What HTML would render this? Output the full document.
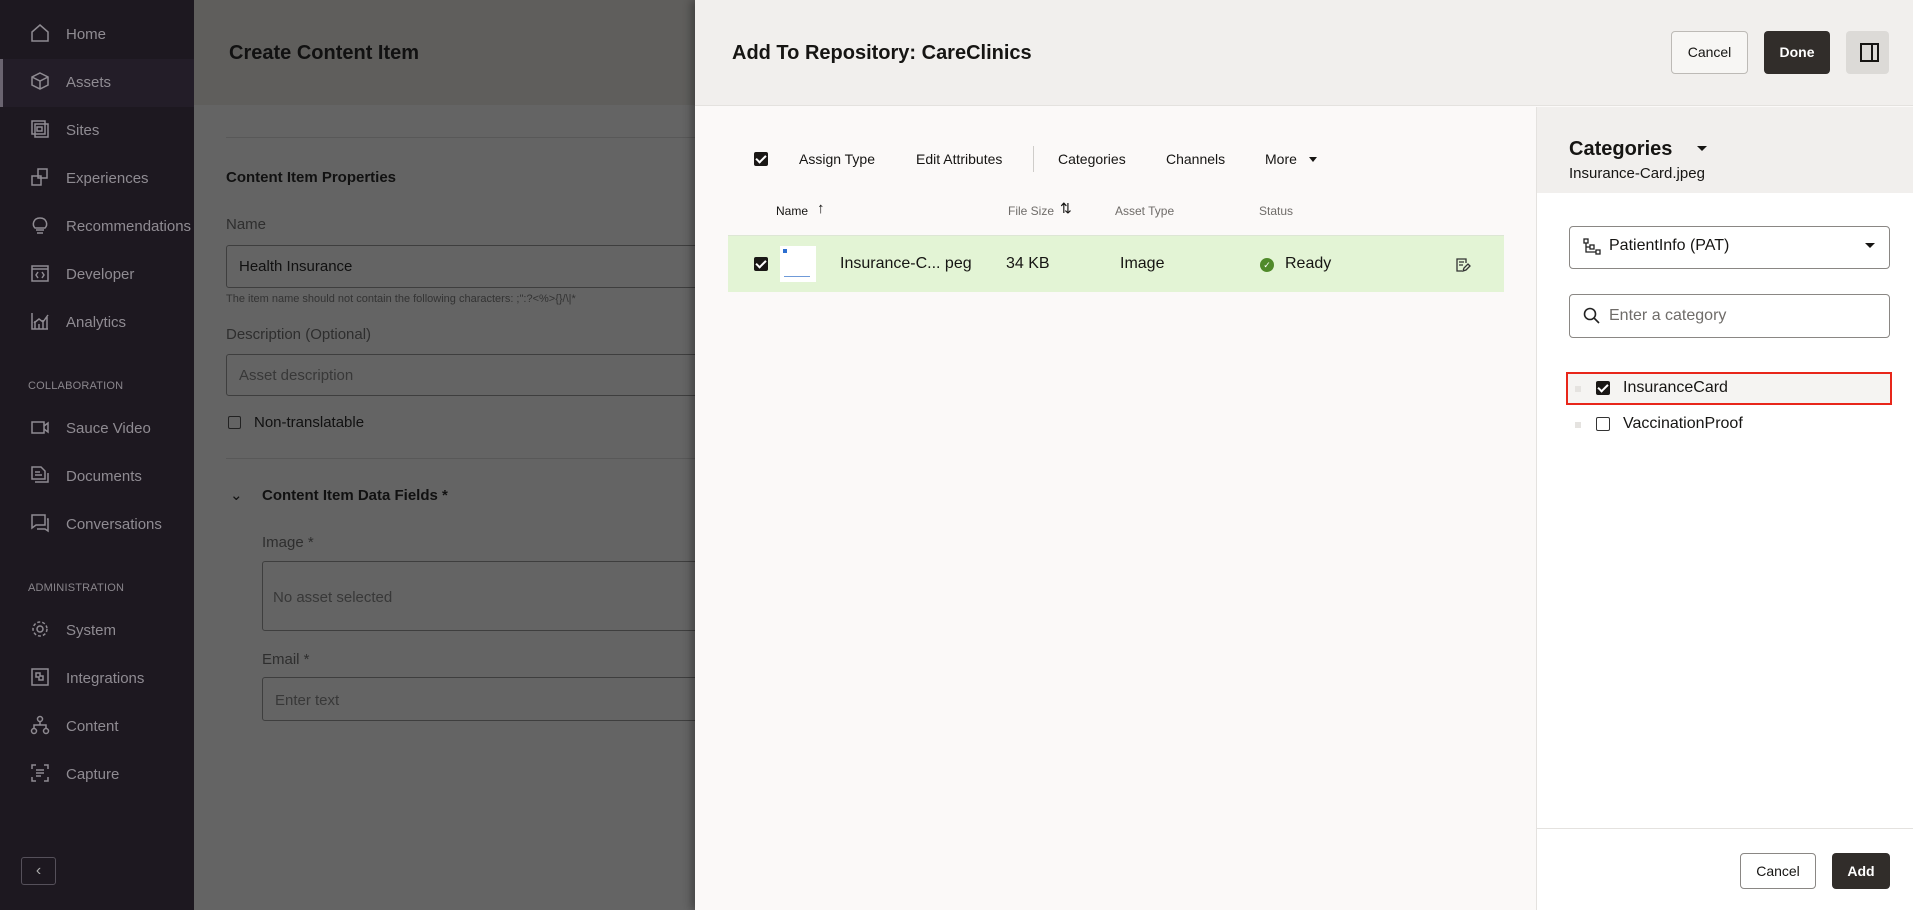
<!DOCTYPE html>
<html><head><meta charset="utf-8">
<style>
*{box-sizing:border-box;margin:0;padding:0}
body{width:1913px;height:910px;overflow:hidden;font-family:"Liberation Sans",sans-serif;position:relative;background:#646464;color:#161513}
.abs{position:absolute}
#side{left:0;top:0;width:194px;height:910px;background:#1d1820}
.nav{position:absolute;left:0;width:194px;height:48px;color:#8f8b92;font-size:15px}
.nav svg{position:absolute;left:30px;top:12px}
.nav span{position:absolute;left:66px;top:15px}
.sec{position:absolute;left:28px;font-size:11px;color:#8a868c;letter-spacing:.2px}
#bg{left:194px;top:0;width:501px;height:910px;background:#646464}
.bgt{position:absolute;color:#111}
.inp{position:absolute;border:1px solid #3e3e3e;border-radius:3px;background:#646464}
#modal{left:695px;top:0;width:1218px;height:910px;background:#fbf9f8;box-shadow:-4px 0 8px rgba(0,0,0,.3)}
.btn{position:absolute;border-radius:4px;font-size:14px;text-align:center;font-weight:bold}
.cb{position:absolute;width:14px;height:14px;border-radius:2px}
.cbon{background:#1a1816}
.cbon:after{content:"";position:absolute;left:4px;top:1px;width:4px;height:8px;border:solid #fff;border-width:0 2px 2px 0;transform:rotate(45deg)}
.cboff{border:1.5px solid #333}
.tb{position:absolute;top:151px;font-size:14px;color:#161513}
.th{position:absolute;top:204px;font-size:12px;color:#6f6c69}
</style></head><body>
<div id="side" class="abs">
 <div class="abs" style="left:0;top:59px;width:194px;height:48px;background:#231d28"></div>
 <div class="abs" style="left:0;top:59px;width:3px;height:48px;background:#6a6470"></div>
 <div class="nav" style="top:11px"><svg width="20" height="20" viewBox="0 0 20 20" fill="none" stroke="#8f8b92" stroke-width="1.5"><path d="M2 9L10 2L18 9V18H2Z"/></svg><span>Home</span></div>
 <div class="nav" style="top:59px"><svg width="20" height="20" viewBox="0 0 20 20" fill="none" stroke="#8f8b92" stroke-width="1.5"><path d="M10 2L18 6V14L10 18L2 14V6Z M2 6L10 10L18 6 M10 10V18"/></svg><span>Assets</span></div>
 <div class="nav" style="top:107px"><svg width="20" height="20" viewBox="0 0 20 20" fill="none" stroke="#8f8b92" stroke-width="1.5"><rect x="2" y="2" width="13" height="13"/><rect x="5" y="5" width="13" height="13"/><rect x="7" y="8" width="5" height="4"/></svg><span>Sites</span></div>
 <div class="nav" style="top:155px"><svg width="20" height="20" viewBox="0 0 20 20" fill="none" stroke="#8f8b92" stroke-width="1.5"><rect x="8" y="2" width="9" height="9"/><rect x="2" y="9" width="9" height="9"/></svg><span>Experiences</span></div>
 <div class="nav" style="top:203px"><svg width="20" height="20" viewBox="0 0 20 20" fill="none" stroke="#8f8b92" stroke-width="1.5"><path d="M5 13C2 10 3 3 10 3C17 3 18 10 15 13Z M6 15H14 M7 18H13"/></svg><span>Recommendations</span></div>
 <div class="nav" style="top:251px"><svg width="20" height="20" viewBox="0 0 20 20" fill="none" stroke="#8f8b92" stroke-width="1.5"><rect x="2" y="3" width="16" height="15"/><path d="M2 6H18 M8 9L6 12L8 15 M12 9L14 12L12 15"/></svg><span>Developer</span></div>
 <div class="nav" style="top:299px"><svg width="20" height="20" viewBox="0 0 20 20" fill="none" stroke="#8f8b92" stroke-width="1.5"><path d="M2 2V18H18 M5 18V10 M9 18V13 M13 18V9 M17 18V6 M4 12L9 8L13 11L18 4"/></svg><span>Analytics</span></div>
 <div class="sec" style="top:380px">COLLABORATION</div>
 <div class="nav" style="top:405px"><svg width="20" height="20" viewBox="0 0 20 20" fill="none" stroke="#8f8b92" stroke-width="1.5"><rect x="2" y="5" width="12" height="11"/><path d="M14 9L18 6V15L14 12"/></svg><span>Sauce Video</span></div>
 <div class="nav" style="top:453px"><svg width="20" height="20" viewBox="0 0 20 20" fill="none" stroke="#8f8b92" stroke-width="1.5"><path d="M2 2H11L15 6V14H2Z M5 17H18V8 M5 7H10 M5 10H12"/></svg><span>Documents</span></div>
 <div class="nav" style="top:501px"><svg width="20" height="20" viewBox="0 0 20 20" fill="none" stroke="#8f8b92" stroke-width="1.5"><path d="M2 2H15V12H6L2 15Z M17 6H18V18L15 16H7"/></svg><span>Conversations</span></div>
 <div class="sec" style="top:582px">ADMINISTRATION</div>
 <div class="nav" style="top:607px"><svg width="20" height="20" viewBox="0 0 20 20" fill="none" stroke="#8f8b92" stroke-width="1.5"><circle cx="10" cy="10" r="3"/><circle cx="10" cy="10" r="7" stroke-dasharray="3 2"/></svg><span>System</span></div>
 <div class="nav" style="top:655px"><svg width="20" height="20" viewBox="0 0 20 20" fill="none" stroke="#8f8b92" stroke-width="1.5"><rect x="2" y="2" width="16" height="16"/><path d="M6 6H10V9H13V13H9V10H6Z"/></svg><span>Integrations</span></div>
 <div class="nav" style="top:703px"><svg width="20" height="20" viewBox="0 0 20 20" fill="none" stroke="#8f8b92" stroke-width="1.5"><circle cx="10" cy="4" r="2.5"/><circle cx="4" cy="16" r="2.5"/><circle cx="16" cy="16" r="2.5"/><path d="M10 7V10 M4 13V10H16V13"/></svg><span>Content</span></div>
 <div class="nav" style="top:751px"><svg width="20" height="20" viewBox="0 0 20 20" fill="none" stroke="#8f8b92" stroke-width="1.5"><path d="M2 6V2H6 M14 2H18V6 M18 14V18H14 M6 18H2V14 M6 7H14 M6 10H14 M6 13H11"/></svg><span>Capture</span></div>
 <div class="abs" style="left:21px;top:857px;width:35px;height:28px;border:1px solid #55505a;border-radius:3px;color:#aaa;font-size:16px;text-align:center;line-height:26px">&#8249;</div>
</div>
<div id="bg" class="abs">
 <div class="abs" style="left:0;top:0;width:501px;height:105px;background:#5f5e5c"></div>
 <div class="bgt" style="left:35px;top:42px;font-size:20px;font-weight:bold">Create Content Item</div>
 <div class="abs" style="left:32px;top:137px;width:469px;height:1px;background:#585858"></div>
 <div class="bgt" style="left:32px;top:169px;font-size:15px;font-weight:bold">Content Item Properties</div>
 <div class="bgt" style="left:32px;top:216px;font-size:15px;color:#2e2e2e">Name</div>
 <div class="inp" style="left:32px;top:245px;width:480px;height:43px"><span class="bgt" style="left:12px;top:12px;font-size:15px">Health Insurance</span></div>
 <div class="bgt" style="left:32px;top:293px;font-size:11px;color:#333">The item name should not contain the following characters: ;":?&lt;%&gt;{}/\|*</div>
 <div class="bgt" style="left:32px;top:326px;font-size:15px;color:#2e2e2e">Description (Optional)</div>
 <div class="inp" style="left:32px;top:354px;width:480px;height:42px"><span class="bgt" style="left:12px;top:12px;font-size:15px;color:#383838">Asset description</span></div>
 <div class="abs" style="left:34px;top:416px;width:13px;height:13px;border:1.5px solid #222;border-radius:2px"></div>
 <div class="bgt" style="left:60px;top:414px;font-size:15px">Non-translatable</div>
 <div class="abs" style="left:32px;top:458px;width:469px;height:1px;background:#585858"></div>
 <div class="bgt" style="left:36px;top:486px;font-size:15px">&#8964;</div>
 <div class="bgt" style="left:68px;top:487px;font-size:15px;font-weight:bold">Content Item Data Fields *</div>
 <div class="bgt" style="left:68px;top:534px;font-size:15px;color:#2e2e2e">Image *</div>
 <div class="inp" style="left:68px;top:561px;width:450px;height:70px"><span class="bgt" style="left:10px;top:27px;font-size:15px;color:#383838">No asset selected</span></div>
 <div class="bgt" style="left:68px;top:651px;font-size:15px;color:#2e2e2e">Email *</div>
 <div class="inp" style="left:68px;top:677px;width:450px;height:44px"><span class="bgt" style="left:12px;top:14px;font-size:15px;color:#383838">Enter text</span></div>
</div>
<div id="modal" class="abs">
 <div class="abs" style="left:0;top:0;width:1218px;height:106px;background:#f1efed;border-bottom:1px solid #e4e2df"></div>
 <div class="abs" style="left:37px;top:42px;font-size:20px;font-weight:bold">Add To Repository: CareClinics</div>
 <div class="btn" style="left:976px;top:31px;width:77px;height:43px;border:1px solid #bdbab6;line-height:41px;font-weight:normal;background:#f7f6f4">Cancel</div>
 <div class="btn" style="left:1069px;top:31px;width:66px;height:43px;background:#312d2a;color:#fff;line-height:43px">Done</div>
 <div class="abs" style="left:1151px;top:31px;width:43px;height:43px;background:#dcdad7;border-radius:4px"><div class="abs" style="left:14px;top:12px;width:19px;height:19px;border:2px solid #161513"></div><div class="abs" style="left:25px;top:12px;width:2px;height:19px;background:#161513"></div></div>

 <div class="cb cbon" style="left:59px;top:152px"></div>
 <div class="tb" style="left:104px">Assign Type</div>
 <div class="tb" style="left:221px">Edit Attributes</div>
 <div class="abs" style="left:338px;top:146px;width:1px;height:26px;background:#cfcdca"></div>
 <div class="tb" style="left:363px">Categories</div>
 <div class="tb" style="left:471px">Channels</div>
 <div class="tb" style="left:570px">More</div>
 <div class="abs" style="left:614px;top:157px;border:4px solid transparent;border-top:5px solid #161513"></div>
 <div class="th" style="left:81px;color:#161513">Name</div>
 <div class="th" style="left:122px;top:200px;font-size:15px;color:#161513">&#8593;</div>
 <div class="th" style="left:313px">File Size</div>
 <div class="th" style="left:365px;top:200px;font-size:14px;color:#161513">&#8645;</div>
 <div class="th" style="left:420px">Asset Type</div>
 <div class="th" style="left:564px">Status</div>
 <div class="abs" style="left:33px;top:235px;width:776px;height:57px;background:#e3f4d5;border-top:1px solid #dde6d5"></div>
 <div class="cb cbon" style="left:59px;top:257px"></div>
 <div class="abs" style="left:85px;top:246px;width:36px;height:36px;background:#fff"><div class="abs" style="left:3px;top:3px;width:4px;height:4px;background:#2d6fd0"></div><div class="abs" style="left:4px;top:30px;width:26px;height:1px;background:#6f9ad8"></div></div>
 <div class="abs" style="left:145px;top:255px;font-size:16px">Insurance-C... peg</div>
 <div class="abs" style="left:311px;top:255px;font-size:16px">34 KB</div>
 <div class="abs" style="left:425px;top:255px;font-size:16px">Image</div>
 <div class="abs" style="left:565px;top:258px;width:14px;height:14px;border-radius:50%;background:#508a2a;color:#fff;font-size:9px;text-align:center;line-height:14px">&#10003;</div>
 <div class="abs" style="left:590px;top:255px;font-size:16px">Ready</div>
 <svg class="abs" style="left:760px;top:257px" width="16" height="16" viewBox="0 0 16 16" fill="none" stroke="#333" stroke-width="1.3"><path d="M11 6V2H2V14H7 M4 5H9 M4 8H8 M8 14L9 11L13 7L15 9L11 13Z"/></svg>

 <div class="abs" style="left:841px;top:107px;width:377px;height:803px;background:#fff;border-left:1px solid #e4e2df"></div>
 <div class="abs" style="left:842px;top:107px;width:376px;height:86px;background:#f1efed"></div>
 <div class="abs" style="left:874px;top:138px;font-size:20px;font-weight:bold">Categories</div>
 <div class="abs" style="left:1002px;top:146px;border:5px solid transparent;border-top:5px solid #161513"></div>
 <div class="abs" style="left:874px;top:165px;font-size:15px">Insurance-Card.jpeg</div>
 <div class="abs" style="left:874px;top:226px;width:321px;height:43px;border:1px solid #8a8784;border-radius:4px"></div>
 <svg class="abs" style="left:888px;top:238px" width="18" height="18" viewBox="0 0 18 18" fill="none" stroke="#222" stroke-width="1.3"><rect x="1" y="1" width="4" height="4"/><rect x="7" y="7" width="4" height="4"/><rect x="13" y="12" width="4" height="4"/><path d="M3 5V14H13 M3 9H7"/></svg>
 <div class="abs" style="left:914px;top:237px;font-size:16px">PatientInfo (PAT)</div>
 <div class="abs" style="left:1170px;top:243px;border:5px solid transparent;border-top:5px solid #161513"></div>
 <div class="abs" style="left:874px;top:294px;width:321px;height:44px;border:1px solid #8a8784;border-radius:4px"></div>
 <svg class="abs" style="left:888px;top:307px" width="17" height="17" viewBox="0 0 17 17" fill="none" stroke="#222" stroke-width="1.6"><circle cx="7" cy="7" r="5.5"/><path d="M11 11L16 16"/></svg>
 <div class="abs" style="left:914px;top:307px;font-size:16px;color:#6f6c69">Enter a category</div>
 <div class="abs" style="left:871px;top:372px;width:326px;height:33px;border:2px solid #e8261a;background:#f5f4f2"></div>
 <div class="abs" style="left:880px;top:386px;width:6px;height:6px;background:#e5e3e0"></div>
 <div class="cb cbon" style="left:901px;top:381px"></div>
 <div class="abs" style="left:928px;top:379px;font-size:16px">InsuranceCard</div>
 <div class="abs" style="left:880px;top:422px;width:6px;height:6px;background:#e5e3e0"></div>
 <div class="cb cboff" style="left:901px;top:417px"></div>
 <div class="abs" style="left:928px;top:415px;font-size:16px">VaccinationProof</div>
 <div class="abs" style="left:842px;top:828px;width:376px;height:1px;background:#e4e2df"></div>
 <div class="btn" style="left:1045px;top:853px;width:76px;height:36px;border:1px solid #8a8784;line-height:34px;font-weight:normal;background:#fff">Cancel</div>
 <div class="btn" style="left:1137px;top:853px;width:58px;height:36px;background:#312d2a;color:#fff;line-height:36px">Add</div>
</div>
</body></html>
